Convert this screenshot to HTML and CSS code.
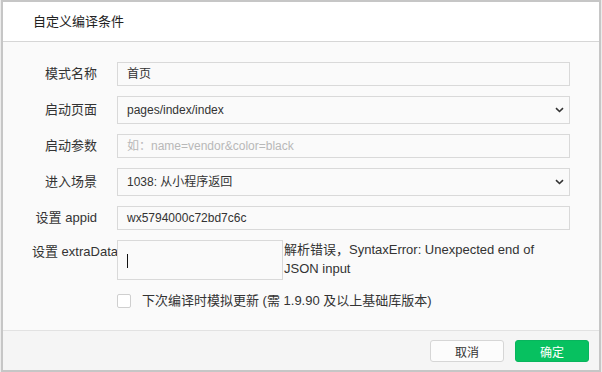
FILE: index.html
```html
<!DOCTYPE html>
<html>
<head>
  <link rel="stylesheet" href="styles.css">
</head>
<body>
  <div class="dialog">
    <div class="dialog-header">自定义编译条件</div>

    <div class="dialog-body">
      <div class="form-row">
        <div class="form-label">模式名称</div>
        <div class="form-input">首页</div>
      </div>
      <div class="form-row">
        <div class="form-label">启动页面</div>
        <div class="form-select">
          <span>pages/index/index</span>
          <svg class="select-arrow" width="9" height="6" viewBox="0 0 9 6"><path d="M1 1.2 L4.5 4.5 L8 1.2" fill="none" stroke="#333" stroke-width="1.6"/></svg>
        </div>
      </div>
      <div class="form-row">
        <div class="form-label">启动参数</div>
        <div class="form-input placeholder">如：name=vendor&amp;color=black</div>
      </div>
      <div class="form-row">
        <div class="form-label">进入场景</div>
        <div class="form-select">
          <span>1038: 从小程序返回</span>
          <svg class="select-arrow" width="9" height="6" viewBox="0 0 9 6"><path d="M1 1.2 L4.5 4.5 L8 1.2" fill="none" stroke="#333" stroke-width="1.6"/></svg>
        </div>
      </div>
      <div class="form-row">
        <div class="form-label">设置 appid</div>
        <div class="form-input">wx5794000c72bd7c6c</div>
      </div>
      <div class="form-row form-row-top">
        <div class="form-label">设置 extraData</div>
        <div class="form-textarea"><span class="caret"></span></div>
        <div class="form-error">解析错误，SyntaxError: Unexpected end of JSON input</div>
      </div>
      <div class="check-row">
        <span class="checkbox"></span>
        <span class="check-text">下次编译时模拟更新 (需 1.9.90 及以上基础库版本)</span>
      </div>
    </div>

    <div class="dialog-footer">
      <button class="btn">取消</button>
      <button class="btn btn-primary">确定</button>
    </div>
  </div>
</body>
</html>
```

FILE: styles.css
```css
body {
  margin: 0;
  padding: 0;
  background-color: #ececec;
  font-family: 'Liberation Sans', 'Noto Sans CJK SC', sans-serif;
  color: #333;
}

.dialog {
  box-sizing: border-box;
  width: 600px;
  height: 372px;
  margin-left: 1px;
  border: 2px solid #c6c6c6;
  background: #fafafa;
  display: flex;
  flex-direction: column;
}

.dialog-header {
  box-sizing: border-box;
  height: 40px;
  padding-left: 30px;
  background: #fff;
  border-bottom: 1px solid #d6d6d6;
  font-size: 13px;
  line-height: 39px;
  color: #222;
}

.dialog-body {
  flex: 1;
  padding: 20px 29px 0 29px;
}

.form-row {
  display: flex;
  align-items: center;
  margin-bottom: 10px;
}

.form-row-top {
  align-items: flex-start;
}

.form-label {
  width: 65px;
  flex-shrink: 0;
  margin-right: 20px;
  text-align: right;
  white-space: nowrap;
  font-size: 13px;
  line-height: 24px;
}

.form-input,
.form-select {
  box-sizing: border-box;
  flex: 1;
  height: 24px;
  padding: 0 9px;
  border: 1px solid #d9d9d9;
  background: #fafafa;
  font-size: 12px;
  line-height: 22px;
}

.form-select {
  height: 28px;
  line-height: 26px;
  display: flex;
  justify-content: space-between;
  align-items: center;
  padding-right: 5px;
}

.placeholder {
  color: #b8b8b8;
}

.form-textarea {
  box-sizing: border-box;
  width: 166px;
  height: 40px;
  padding: 13px 9px 0 9px;
  border: 1px solid #d9d9d9;
  background: #fafafa;
}

.caret {
  display: block;
  width: 1px;
  height: 14px;
  background: #111;
}

.form-error {
  flex: 1;
  margin-left: 1px;
  font-size: 13px;
  line-height: 19px;
}

.check-row {
  display: flex;
  align-items: center;
  margin-top: 13px;
  padding-left: 85px;
}

.checkbox {
  box-sizing: border-box;
  width: 14px;
  height: 14px;
  border: 1px solid #cfcfcf;
  border-radius: 2px;
  background: #fff;
}

.check-text {
  margin-left: 11px;
  font-size: 13px;
  line-height: 16px;
}

.dialog-footer {
  box-sizing: border-box;
  height: 40px;
  padding: 9px 10px 0 0;
  border-top: 1px solid #e2e2e2;
  background: #f5f5f5;
  display: flex;
  justify-content: flex-end;
  gap: 11px;
}

.btn {
  box-sizing: border-box;
  width: 74px;
  height: 22px;
  padding: 0;
  border: 1px solid #d6d6d6;
  border-radius: 3px;
  background: #fcfcfc;
  color: #333;
  font-family: 'Liberation Sans', 'Noto Sans CJK SC', sans-serif;
  font-size: 12px;
}

.btn-primary {
  border-color: #08b55d;
  background: #07c160;
  color: #fff;
}
```
